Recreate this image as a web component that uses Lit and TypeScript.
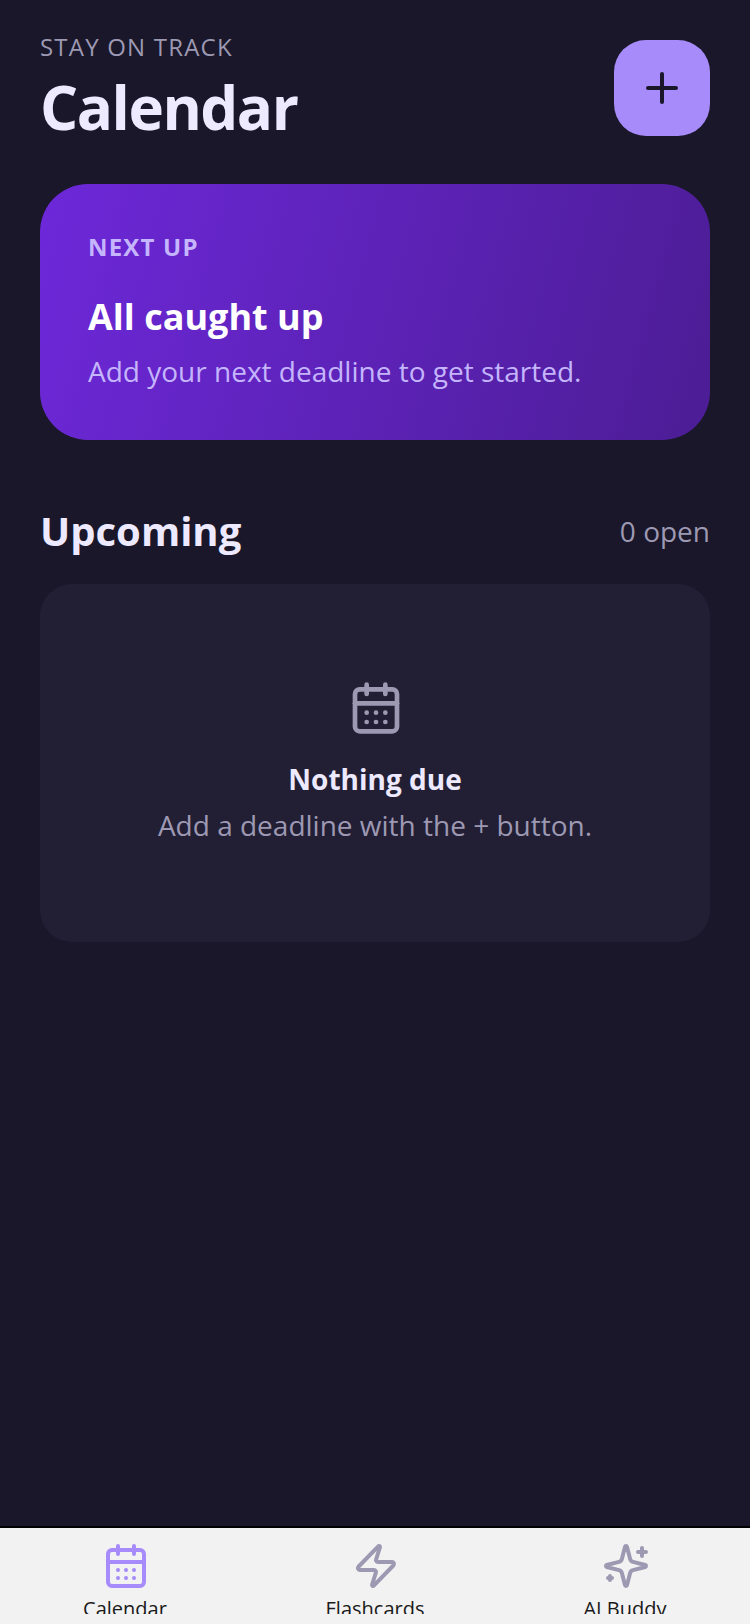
import { LitElement, html, css, svg } from "lit";
import { customElement } from "lit/decorators.js";

const calendar = svg`<path d="M8 2v4M16 2v4"/><rect x="3" y="4" width="18" height="18" rx="2"/><path d="M3 10h18"/><path d="M8 14h.01M12 14h.01M16 14h.01M8 18h.01M12 18h.01M16 18h.01"/>`;
const bolt = svg`<path d="M4 14a1 1 0 0 1-.78-1.63l9.9-10.2a.5.5 0 0 1 .86.46l-1.92 6.02A1 1 0 0 0 13 10h7a1 1 0 0 1 .78 1.63l-9.9 10.2a.5.5 0 0 1-.86-.46l1.92-6.02A1 1 0 0 0 11 14z"/>`;
const sparkles = svg`<path d="M9.94 15.5A2 2 0 0 0 8.5 14.06l-6.14-1.58a.5.5 0 0 1 0-.96L8.5 9.94A2 2 0 0 0 9.94 8.5l1.58-6.14a.5.5 0 0 1 .96 0L14.06 8.5A2 2 0 0 0 15.5 9.94l6.14 1.58a.5.5 0 0 1 0 .96L15.5 14.06a2 2 0 0 0-1.44 1.44l-1.58 6.14a.5.5 0 0 1-.96 0z"/><path d="M20 3v4M22 5h-4M4 17v2M5 18H3"/>`;

@customElement("app-root")
export class AppRoot extends LitElement {
  static styles = css`
    :host {
      display: flex;
      flex-direction: column;
      height: 1624px;
      overflow: hidden;
      background: #191729;
      font-family: "Open Sans", sans-serif;
    }
    main {
      flex: 1;
      min-height: 0;
      padding: 40px 40px 0;
    }
    svg.icon {
      fill: none;
      stroke: currentColor;
      stroke-width: 2;
      stroke-linecap: round;
      stroke-linejoin: round;
      display: block;
      flex: none;
    }
    .head {
      display: flex;
      justify-content: space-between;
      align-items: flex-start;
    }
    .eyebrow {
      font-size: 24px;
      line-height: 16px;
      letter-spacing: 1.2px;
      color: #9d99b3;
      margin-top: -1px;
    }
    h1 {
      margin: 23px 0 0;
      font-size: 60px;
      line-height: 58px;
      font-weight: 700;
      color: #ede9fe;
      letter-spacing: -1.46px;
    }
    .add {
      width: 96px;
      height: 96px;
      border-radius: 32px;
      background: #a78bfa;
      color: #191729;
      display: flex;
      align-items: center;
      justify-content: center;
    }
    .next {
      margin-top: 48px;
      height: 256px;
      box-sizing: border-box;
      border-radius: 48px;
      padding: 48px;
      background: linear-gradient(105deg, #6d28d9, #4c1d95);
    }
    .next-label {
      font-size: 24px;
      line-height: 30px;
      font-weight: 700;
      letter-spacing: 1.2px;
      color: #c4b5fd;
    }
    .next-title {
      margin-top: 31px;
      font-size: 36px;
      line-height: 48px;
      font-weight: 700;
      color: #fff;
    }
    .next-sub {
      margin-top: 10px;
      font-size: 28px;
      line-height: 40px;
      color: #c4b5fd;
    }
    .section {
      margin-top: 61px;
      display: flex;
      justify-content: space-between;
      align-items: center;
      height: 60px;
    }
    h2 {
      margin: 0;
      font-size: 40px;
      line-height: 60px;
      font-weight: 700;
      color: #ede9fe;
    }
    .count {
      font-size: 28px;
      color: #9d99b3;
    }
    .empty {
      margin-top: 23px;
      height: 358px;
      box-sizing: border-box;
      border-radius: 32px;
      background: #221f35;
      display: flex;
      flex-direction: column;
      align-items: center;
      padding-top: 96px;
    }
    .empty svg {
      color: #9d99b3;
      margin-left: 2px;
    }
    .empty-title {
      margin-top: 23px;
      font-size: 28px;
      line-height: 40px;
      font-weight: 700;
      color: #ede9fe;
    }
    .empty-sub {
      margin-top: 6px;
      font-size: 28px;
      line-height: 40px;
      color: #9d99b3;
    }
    nav {
      flex: none;
      height: 98px;
      box-sizing: border-box;
      border-top: 2px solid #000;
      background: #f2f2f2;
      display: flex;
    }
    .tab {
      flex: 1;
      height: 86px;
      overflow: hidden;
      display: flex;
      flex-direction: column;
      align-items: center;
      padding-top: 14px;
      box-sizing: border-box;
      color: #9d99b3;
    }
    .tab svg {
      margin-left: 2px;
    }
    .tab.on {
      color: #a78bfa;
    }
    .tab span {
      margin-top: 5px;
      font-size: 20px;
      line-height: 28px;
      color: #1a1a1a;
      white-space: nowrap;
    }
  `;

  render() {
    return html`
      <main>
        <div class="head">
          <div>
            <div class="eyebrow">STAY ON TRACK</div>
            <h1>Calendar</h1>
          </div>
          <div class="add">
            <svg class="icon" width="48" height="48" viewBox="0 0 24 24"><path d="M5 12h14M12 5v14"/></svg>
          </div>
        </div>
        <div class="next">
          <div class="next-label">NEXT UP</div>
          <div class="next-title">All caught up</div>
          <div class="next-sub">Add your next deadline to get started.</div>
        </div>
        <div class="section">
          <h2>Upcoming</h2>
          <div class="count">0 open</div>
        </div>
        <div class="empty">
          <svg class="icon" width="56" height="56" viewBox="0 0 24 24">${calendar}</svg>
          <div class="empty-title">Nothing due</div>
          <div class="empty-sub">Add a deadline with the + button.</div>
        </div>
      </main>
      <nav>
        <div class="tab on">
          <svg class="icon" width="48" height="48" viewBox="0 0 24 24">${calendar}</svg>
          <span>Calendar</span>
        </div>
        <div class="tab">
          <svg class="icon" width="48" height="48" viewBox="0 0 24 24">${bolt}</svg>
          <span>Flashcards</span>
        </div>
        <div class="tab">
          <svg class="icon" width="48" height="48" viewBox="0 0 24 24">${sparkles}</svg>
          <span>AI Buddy</span>
        </div>
      </nav>
    `;
  }
}
